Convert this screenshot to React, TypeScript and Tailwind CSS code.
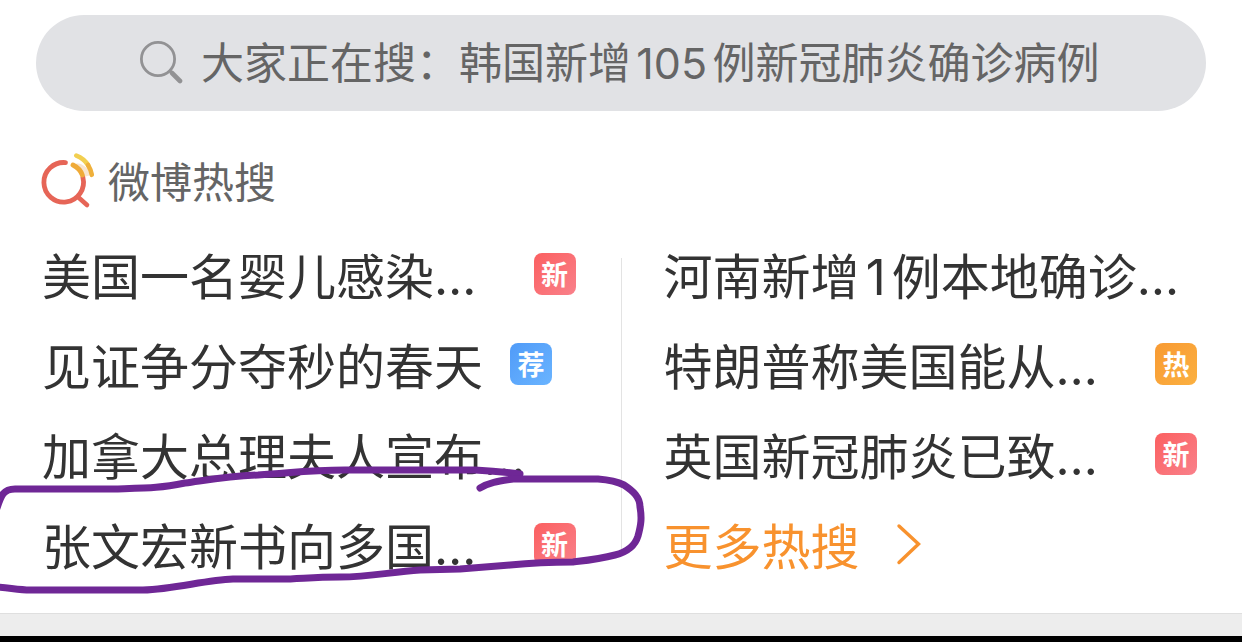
import clsx from "clsx";

type Tag = "new" | "rec" | "hot";

interface Topic {
  title: string;
  tag?: Tag;
  inline?: boolean;
}

const tags = {
  new: { label: "新", style: "from-[#fb5f60] to-[#f9808a]" },
  rec: { label: "荐", style: "from-[#509bf8] to-[#6ab4ff]" },
  hot: { label: "热", style: "from-[#f89a33] to-[#fbb040]" },
};

const leftTopics: Topic[] = [
  { title: "美国一名婴儿感染…", tag: "new" },
  { title: "见证争分夺秒的春天", tag: "rec", inline: true },
  { title: "加拿大总理夫人宣布…" },
  { title: "张文宏新书向多国…", tag: "new" },
];

const rightTopics: Topic[] = [
  { title: "河南新增1例本地确诊…" },
  { title: "特朗普称美国能从…", tag: "hot" },
  { title: "英国新冠肺炎已致…", tag: "new" },
];

const TopicTag = ({ tag }: { tag: Tag }) => (
  <span
    className={clsx(
      "flex size-[42px] shrink-0 items-center justify-center rounded-lg bg-linear-to-br pt-[3px] text-[27px] leading-none font-bold text-white",
      tags[tag].style
    )}
  >
    {tags[tag].label}
  </span>
);

const TopicRow = ({ topic }: { topic: Topic }) => (
  <li>
    <a
      href="#"
      className={clsx(
        "flex h-[90px] items-center whitespace-nowrap",
        topic.inline ? "gap-[27px]" : "justify-between"
      )}
    >
      <span className="pt-2">{topic.title}</span>
      {topic.tag && <TopicTag tag={topic.tag} />}
    </a>
  </li>
);

const SearchBar = () => (
  <label className="mx-9 mt-[15px] flex h-24 items-center gap-[18px] rounded-full bg-[#e1e2e5] pl-[103px]">
    <svg
      className="size-11 shrink-0"
      viewBox="0 0 44 44"
      fill="none"
      stroke="#929294"
      strokeLinecap="round"
      aria-hidden="true"
    >
      <circle cx="19" cy="18" r="16.6" strokeWidth="2.8" />
      <path d="M31 30 32.5 31.5" strokeWidth="3" />
      <path d="M33 32 41 40" strokeWidth="4.6" />
    </svg>
    <input
      type="search"
      aria-label="搜索"
      placeholder="大家正在搜：韩国新增105例新冠肺炎确诊病例"
      className="h-full min-w-0 flex-1 bg-transparent text-[43px] outline-none [text-autospace:normal] placeholder:text-[#656565]"
    />
  </label>
);

const HotIcon = () => (
  <svg
    className="h-14 w-[54px] shrink-0"
    viewBox="41 153 54 56"
    fill="none"
    strokeLinecap="round"
    aria-hidden="true"
  >
    <path d="M74 165 C79 160 89 168 91 175 L84 177Z" fill="#f8e5d0" />
    <path
      d="M65.5 162.6 A19.8 19.8 0 1 0 82.9 177.5"
      stroke="#e66557"
      strokeWidth="4.8"
    />
    <path d="M78 197 87 205" stroke="#e66557" strokeWidth="4.6" />
    <path d="M73 165 Q80 168.5 82.3 175" stroke="#efaa38" strokeWidth="4.8" />
    <path d="M76.3 155.6 Q84 158.5 88 165" stroke="#f2cf50" strokeWidth="4.6" />
    <path d="M88 165 Q90.8 169.5 91.8 174.8" stroke="#efb03b" strokeWidth="4.6" />
  </svg>
);

// hand drawn circle round the fourth topic
const PenMark = () => (
  <svg
    className="pointer-events-none absolute top-0 left-0 h-[612px] w-[660px]"
    viewBox="0 0 660 612"
    fill="none"
    stroke="#6f2796"
    strokeWidth="7"
    strokeLinecap="round"
    strokeLinejoin="round"
    aria-hidden="true"
  >
    <path d="M-3 508 C1 496 3 489 15 489 H118 C150 488 160 488 185 483 C220 478 230 476 258 475 C300 472 310 470 345 470 H475 C495 471 505 472 520 474" />
    <path d="M480 488 C490 482 500 481 513 479 H598 C610 480 616 481 624 485 C633 491 640 497 640 507 C642 518 641 525 638 536 C635 546 627 552 615 555 C600 559 590 560 573 562 C550 562 530 563 510 565 L460 569 L420 570 C390 572 370 577 340 577 C310 577 300 579 280 579 H233 C205 580 175 589 143 590 H30 C20 590 10 588 -3 587" />
  </svg>
);

const App = () => {
  return (
    <div className="relative flex min-h-screen flex-col overflow-hidden bg-white font-['Inter','Noto_Sans_CJK_SC',sans-serif] text-[#333]">
      <SearchBar />
      <h2 className="mt-[42px] flex h-14 items-center gap-[13px] px-[41px] text-[42px] leading-[56px] text-[#656565]">
        <HotIcon />
        <span className="pt-[3px]">微博热搜</span>
      </h2>
      <main className="mt-5 flex text-[49px] leading-[64px] [text-autospace:normal]">
        <ul className="min-w-0 flex-1 pr-[45px] pl-[42px]">
          {leftTopics.map((topic) => (
            <TopicRow key={topic.title} topic={topic} />
          ))}
        </ul>
        <div className="mt-[29px] mb-[37px] w-px bg-[#e3e3e3]" />
        <ul className="min-w-0 flex-1 pr-[45px] pl-[42px]">
          {rightTopics.map((topic) => (
            <TopicRow key={topic.title} topic={topic} />
          ))}
          <li>
            <a
              href="#"
              className="flex h-[90px] items-center gap-9 text-[#f8922e]"
            >
              <span className="pt-2">更多热搜</span>
              <svg
                className="h-11 w-[26px]"
                viewBox="0 0 26 44"
                fill="none"
                stroke="currentColor"
                strokeWidth="3.4"
                strokeLinecap="round"
                aria-hidden="true"
              >
                <path d="M3 4 22.5 22 3 40.5" />
              </svg>
            </a>
          </li>
        </ul>
      </main>
      <footer className="mt-6 flex-1 border-t border-b-[6px] border-t-[#dfdfdf] border-b-black bg-[#ededed]" />
      <PenMark />
    </div>
  );
};

export default App;
